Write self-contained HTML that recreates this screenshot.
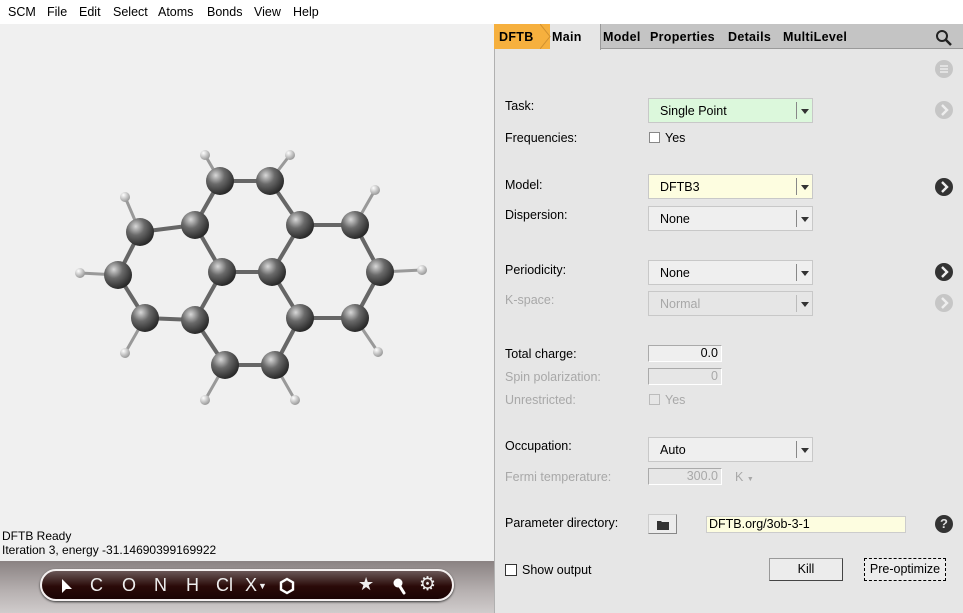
<!DOCTYPE html>
<html><head><style>
*{margin:0;padding:0;box-sizing:border-box}
body{width:963px;height:613px;overflow:hidden;background:#f0f0f0;font-family:"Liberation Sans","DejaVu Sans",sans-serif;font-size:12.5px;color:#000;position:relative}
.a{position:absolute;white-space:nowrap}
.menu{top:0;left:0;width:963px;height:24px;background:#fff}
.menu span{position:absolute;top:5px}
.panel{left:494px;top:24px;width:469px;height:589px;background:#e6e6e6;border-left:1px solid #b0b0b0}
.tabs{left:494px;top:24px;width:469px;height:25px;background:#c4c4c4;border-bottom:1px solid #9a9a9a}
.tab{top:30px;font-weight:bold;font-size:12.5px;letter-spacing:0.3px}
.lbl{left:505px}
.dis{color:#a8a8a8}
.combo{left:648px;width:165px;height:25px;border:1px solid #c8c8c8;background:#efefef}
.combo span{position:absolute;left:11px;top:5px}
.combo i{position:absolute;right:0;top:3px;width:16px;height:17px;border-left:1px solid #888}
.combo i:after{content:"";position:absolute;left:4px;top:7px;border-left:4px solid transparent;border-right:4px solid transparent;border-top:5px solid #333}
.fld{left:648px;width:74px;height:17px;border:1px solid #aaa;border-bottom-color:#fff;border-right-color:#fff;background:#efefef;text-align:right;padding-right:3px;line-height:15px}
.circ{left:935px;width:18px;height:18px;border-radius:50%;background:#c6c6c6}
.circ.d{background:#333}
.circ svg{position:absolute;left:0;top:0}
.cb{width:11px;height:11px;border:1px solid #555;background:#fff}
.btn{height:23px;border:1px solid #999;border-right-color:#444;border-bottom-color:#444;background:#ececec;text-align:center;line-height:21px}
</style></head><body>
<div class="a menu"><span style="left:8px">SCM</span><span style="left:47px">File</span><span style="left:79px">Edit</span><span style="left:113px">Select</span><span style="left:158px">Atoms</span><span style="left:207px">Bonds</span><span style="left:254px">View</span><span style="left:293px">Help</span></div>

<svg class="a" style="left:0;top:24px" width="494" height="540">
<defs><radialGradient id="g" cx="35%" cy="30%" r="70%"><stop offset="0" stop-color="#d8d8d8"/><stop offset=".45" stop-color="#6a6a6a"/><stop offset="1" stop-color="#2a2a2a"/></radialGradient>
<radialGradient id="h" cx="35%" cy="30%" r="70%"><stop offset="0" stop-color="#fff"/><stop offset="1" stop-color="#9a9a9a"/></radialGradient></defs>
<g transform="translate(0,-24)" stroke-linecap="round">
<g stroke="#666" stroke-width="4">
<line x1="220" y1="181" x2="270" y2="181"/><line x1="220" y1="181" x2="195" y2="225"/><line x1="270" y1="181" x2="300" y2="225"/><line x1="195" y1="225" x2="222" y2="272"/><line x1="300" y1="225" x2="272" y2="272"/><line x1="222" y1="272" x2="272" y2="272"/>
<line x1="195" y1="225" x2="140" y2="232"/><line x1="140" y1="232" x2="118" y2="275"/><line x1="118" y1="275" x2="145" y2="318"/><line x1="145" y1="318" x2="195" y2="320"/><line x1="195" y1="320" x2="222" y2="272"/>
<line x1="300" y1="225" x2="355" y2="225"/><line x1="355" y1="225" x2="380" y2="272"/><line x1="380" y1="272" x2="355" y2="318"/><line x1="355" y1="318" x2="300" y2="318"/><line x1="300" y1="318" x2="272" y2="272"/>
<line x1="195" y1="320" x2="225" y2="365"/><line x1="225" y1="365" x2="275" y2="365"/><line x1="275" y1="365" x2="300" y2="318"/>
</g>
<g stroke="#999" stroke-width="3">
<line x1="220" y1="181" x2="205" y2="155"/><line x1="270" y1="181" x2="290" y2="155"/><line x1="140" y1="232" x2="125" y2="197"/><line x1="355" y1="225" x2="375" y2="190"/><line x1="118" y1="275" x2="80" y2="273"/><line x1="380" y1="272" x2="422" y2="270"/><line x1="145" y1="318" x2="125" y2="353"/><line x1="355" y1="318" x2="378" y2="352"/><line x1="225" y1="365" x2="205" y2="400"/><line x1="275" y1="365" x2="295" y2="400"/>
</g>
<g fill="url(#h)">
<circle cx="205" cy="155" r="5"/><circle cx="290" cy="155" r="5"/><circle cx="125" cy="197" r="5"/><circle cx="375" cy="190" r="5"/><circle cx="80" cy="273" r="5"/><circle cx="422" cy="270" r="5"/><circle cx="125" cy="353" r="5"/><circle cx="378" cy="352" r="5"/><circle cx="205" cy="400" r="5"/><circle cx="295" cy="400" r="5"/>
</g>
<g fill="url(#g)">
<circle cx="220" cy="181" r="14"/><circle cx="270" cy="181" r="14"/><circle cx="195" cy="225" r="14"/><circle cx="300" cy="225" r="14"/><circle cx="355" cy="225" r="14"/><circle cx="140" cy="232" r="14"/><circle cx="222" cy="272" r="14"/><circle cx="272" cy="272" r="14"/><circle cx="118" cy="275" r="14"/><circle cx="380" cy="272" r="14"/><circle cx="145" cy="318" r="14"/><circle cx="195" cy="320" r="14"/><circle cx="300" cy="318" r="14"/><circle cx="355" cy="318" r="14"/><circle cx="225" cy="365" r="14"/><circle cx="275" cy="365" r="14"/>
</g></g></svg>

<div class="a" style="left:2px;top:529px;font-size:12px">DFTB Ready</div>
<div class="a" style="left:2px;top:543px;font-size:12px">Iteration 3, energy -31.14690399169922</div>

<div class="a" style="left:0;top:561px;width:494px;height:52px;background:linear-gradient(#8a8282,#b8b2b2 60%,#d0cccc)"></div>
<div class="a" style="left:40px;top:569px;width:414px;height:32px;border-radius:16px;border:2px solid #f4f0f0;background:linear-gradient(#6a5858,#2a0a08 55%,#1a0404);color:#eee;font-size:18px;box-shadow:0 1px 2px #333">
<svg class="a" style="left:18px;top:7px" width="14" height="16"><path d="M2 1 L2 15 L6 11 L12 11 Z" fill="#fff"/></svg>
<span class="a" style="left:48px;top:4px">C</span><span class="a" style="left:80px;top:4px">O</span><span class="a" style="left:112px;top:4px">N</span><span class="a" style="left:144px;top:4px">H</span><span class="a" style="left:174px;top:4px">Cl</span><span class="a" style="left:203px;top:4px">X</span><span class="a" style="left:216px;top:10px;font-size:9px">▼</span>
<svg class="a" style="left:236px;top:6px" width="18" height="18"><polygon points="9,2 15,5.5 15,12.5 9,16 3,12.5 3,5.5" fill="none" stroke="#fff" stroke-width="2.4"/></svg>
<span class="a" style="left:316px;top:3px">★</span>
<svg class="a" style="left:350px;top:6px" width="16" height="18"><circle cx="6" cy="6" r="4.5" fill="#fff"/><line x1="7" y1="8" x2="12" y2="16" stroke="#fff" stroke-width="3" stroke-linecap="round"/></svg>
<span class="a" style="left:377px;top:2px;font-size:19px">⚙</span>
</div>

<div class="a panel"></div>
<div class="a tabs"></div>
<div class="a" style="left:494px;top:24px;width:56px;height:25px;background:#f6b03e"></div>
<div class="a" style="left:550px;top:24px;width:51px;height:26px;background:#e6e6e6;border-right:1px solid #9a9a9a"></div>
<svg class="a" style="left:540px;top:24px" width="12" height="25"><polygon points="0,0 10,12.5 0,25" fill="#f6b03e"/><polyline points="0,0 10,12.5 0,25" fill="none" stroke="#d09030"/></svg>
<span class="a tab" style="left:499px">DFTB</span>
<span class="a tab" style="left:552px">Main</span>
<span class="a tab" style="left:603px">Model</span>
<span class="a tab" style="left:650px">Properties</span>
<span class="a tab" style="left:728px">Details</span>
<span class="a tab" style="left:783px">MultiLevel</span>
<svg class="a" style="left:935px;top:29px" width="18" height="18"><circle cx="7" cy="7" r="5" fill="none" stroke="#222" stroke-width="2"/><line x1="11" y1="11" x2="16" y2="16" stroke="#222" stroke-width="2.5"/></svg>

<div class="a circ" style="top:60px"><svg width="18" height="18"><g stroke="#eee" stroke-width="1.4"><line x1="5" y1="6" x2="13" y2="6"/><line x1="5" y1="9" x2="13" y2="9"/><line x1="5" y1="12" x2="13" y2="12"/></g></svg></div>

<span class="a lbl" style="top:99px">Task:</span>
<div class="a combo" style="top:98px;background:#dcf8dc"><span>Single Point</span><i></i></div>
<div class="a circ" style="top:101px"><svg width="18" height="18"><polyline points="7,4 12,9 7,14" fill="none" stroke="#eee" stroke-width="2.4"/></svg></div>
<span class="a lbl" style="top:131px">Frequencies:</span>
<div class="a cb" style="left:649px;top:132px;border-color:#888"></div><span class="a" style="left:665px;top:131px">Yes</span>

<span class="a lbl" style="top:178px">Model:</span>
<div class="a combo" style="top:174px;background:#fdfde0"><span>DFTB3</span><i></i></div>
<div class="a circ d" style="top:178px"><svg width="18" height="18"><polyline points="7,4 12,9 7,14" fill="none" stroke="#eee" stroke-width="2.4"/></svg></div>
<span class="a lbl" style="top:208px">Dispersion:</span>
<div class="a combo" style="top:206px"><span>None</span><i></i></div>

<span class="a lbl" style="top:263px">Periodicity:</span>
<div class="a combo" style="top:260px"><span>None</span><i></i></div>
<div class="a circ d" style="top:263px"><svg width="18" height="18"><polyline points="7,4 12,9 7,14" fill="none" stroke="#eee" stroke-width="2.4"/></svg></div>
<span class="a lbl dis" style="top:293px">K-space:</span>
<div class="a combo dis" style="top:291px;background:#e6e6e6"><span>Normal</span><i style="border-left-color:#bbb"></i></div>
<div class="a circ" style="top:294px"><svg width="18" height="18"><polyline points="7,4 12,9 7,14" fill="none" stroke="#eee" stroke-width="2.4"/></svg></div>

<span class="a lbl" style="top:347px">Total charge:</span>
<div class="a fld" style="top:345px">0.0</div>
<span class="a lbl dis" style="top:370px">Spin polarization:</span>
<div class="a fld dis" style="top:368px;background:#e6e6e6">0</div>
<span class="a lbl dis" style="top:393px">Unrestricted:</span>
<div class="a cb" style="left:649px;top:394px;border-color:#bbb;background:#e6e6e6"></div><span class="a dis" style="left:665px;top:393px">Yes</span>

<span class="a lbl" style="top:439px">Occupation:</span>
<div class="a combo" style="top:437px"><span>Auto</span><i></i></div>
<span class="a lbl dis" style="top:470px">Fermi temperature:</span>
<div class="a fld dis" style="top:468px;background:#e6e6e6">300.0</div>
<span class="a dis" style="left:735px;top:470px">K <span style="font-size:7px">▼</span></span>

<span class="a lbl" style="top:516px">Parameter directory:</span>
<div class="a btn" style="left:648px;top:514px;width:29px;height:20px;border-color:#ccc #888 #888 #ccc"><svg width="14" height="12" style="margin-top:4px"><path d="M1 2h4l1 1h7v8H1z" fill="#333"/></svg></div>
<div class="a" style="left:706px;top:516px;width:200px;height:17px;background:#fdfde0;border:1px solid #ccc;padding-left:2px;line-height:15px">DFTB.org/3ob-3-1</div>
<div class="a circ d" style="top:515px;color:#ddd;font-weight:bold;text-align:center;line-height:18px;font-size:13px">?</div>

<div class="a cb" style="left:505px;top:564px;width:12px;height:12px;border-color:#333"></div>
<span class="a" style="left:522px;top:563px">Show output</span>
<div class="a btn" style="left:769px;top:558px;width:74px">Kill</div>
<div class="a btn" style="left:864px;top:558px;width:82px;border:1px dashed #000">Pre-optimize</div>
</body></html>
